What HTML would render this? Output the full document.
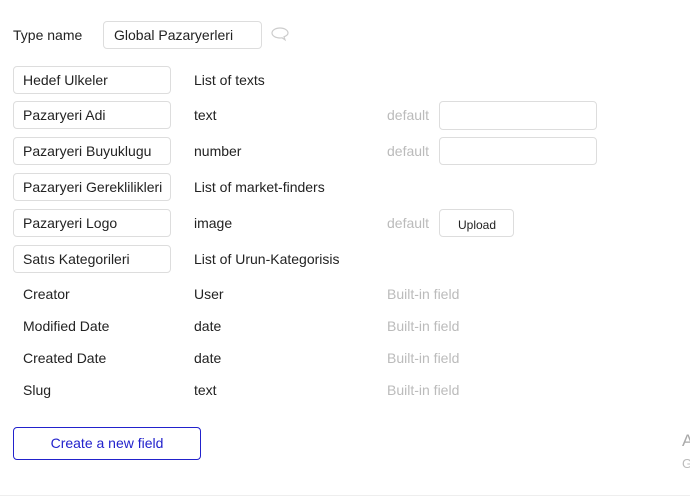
<!DOCTYPE html>
<html><head><meta charset="utf-8"><style>
body{margin:0;width:690px;height:497px;background:#fff;font-family:"Liberation Sans",sans-serif;font-size:14px;color:#222;position:relative;overflow:hidden}
.a{position:absolute;white-space:nowrap;line-height:18px}
.box{position:absolute;border:1px solid #ddd;border-radius:4px;box-sizing:border-box;background:#fff}
.g{color:#bbb}
</style></head><body>
<div class="a" style="left:13px;top:26px">Type name</div>
<div class="box" style="left:103px;top:21px;width:159px;height:28px"></div>
<div class="a" style="left:114px;top:26px">Global Pazaryerleri</div>
<svg class="a" style="left:270px;top:26px" width="20" height="16" viewBox="0 0 20 16"><path d="M10 2C5.5 2 2 4.3 2 7s3.5 5 8 5c.7 0 1.4-.1 2-.2l3 2-1-3c2.3-.9 4-2.3 4-3.8C18 4.3 14.5 2 10 2z" fill="none" stroke="#ccc" stroke-width="1.2"/></svg>

<div class="box" style="left:13px;top:66px;width:158px;height:28px"></div><div class="a" style="left:23px;top:71px">Hedef Ulkeler</div><div class="a" style="left:194px;top:71px">List of texts</div>
<div class="box" style="left:13px;top:101px;width:158px;height:28px"></div><div class="a" style="left:23px;top:106px">Pazaryeri Adi</div><div class="a" style="left:194px;top:106px">text</div>
<div class="a g" style="left:387px;top:106px">default</div><div class="box" style="left:439px;top:101px;width:158px;height:29px"></div>
<div class="box" style="left:13px;top:137px;width:158px;height:28px"></div><div class="a" style="left:23px;top:142px">Pazaryeri Buyuklugu</div><div class="a" style="left:194px;top:142px">number</div>
<div class="a g" style="left:387px;top:142px">default</div><div class="box" style="left:439px;top:137px;width:158px;height:28px"></div>
<div class="box" style="left:13px;top:173px;width:158px;height:28px"></div><div class="a" style="left:23px;top:178px">Pazaryeri Gereklilikleri</div><div class="a" style="left:194px;top:178px">List of market-finders</div>
<div class="box" style="left:13px;top:209px;width:158px;height:28px"></div><div class="a" style="left:23px;top:214px">Pazaryeri Logo</div><div class="a" style="left:194px;top:214px">image</div>
<div class="a g" style="left:387px;top:214px">default</div><div class="box" style="left:439px;top:209px;width:75px;height:28px"></div><div class="a" style="left:458px;top:216px;font-size:12px">Upload</div>
<div class="box" style="left:13px;top:245px;width:158px;height:28px"></div><div class="a" style="left:23px;top:250px">Satıs Kategorileri</div><div class="a" style="left:194px;top:250px">List of Urun-Kategorisis</div>

<div class="a" style="left:23px;top:285px">Creator</div><div class="a" style="left:194px;top:285px">User</div><div class="a g" style="left:387px;top:285px">Built-in field</div>
<div class="a" style="left:23px;top:317px">Modified Date</div><div class="a" style="left:194px;top:317px">date</div><div class="a g" style="left:387px;top:317px">Built-in field</div>
<div class="a" style="left:23px;top:349px">Created Date</div><div class="a" style="left:194px;top:349px">date</div><div class="a g" style="left:387px;top:349px">Built-in field</div>
<div class="a" style="left:23px;top:381px">Slug</div><div class="a" style="left:194px;top:381px">text</div><div class="a g" style="left:387px;top:381px">Built-in field</div>

<div class="box" style="left:13px;top:427px;width:188px;height:33px;border-color:#2222cc"></div>
<div class="a" style="left:13px;top:434px;width:188px;text-align:center;color:#2222cc">Create a new field</div>
<div class="a g" style="left:682px;top:432px;font-size:17px;color:#aaa">A</div>
<div class="a g" style="left:682px;top:455px;font-size:13px">G</div>
<div style="position:absolute;left:0;top:495px;width:690px;height:1px;background:#eee"></div>
</body></html>
